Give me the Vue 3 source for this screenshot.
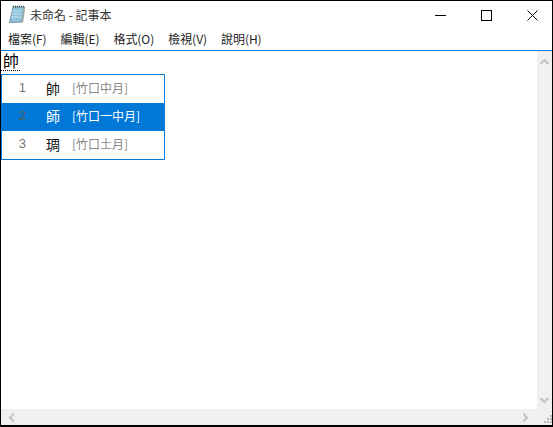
<script setup>
const menus = ['檔案(F)', '編輯(E)', '格式(O)', '檢視(V)', '說明(H)']
const candidates = [
  { n: 1, ch: '帥', code: '[竹口中月]', active: false },
  { n: 2, ch: '師', code: '[竹口一中月]', active: true },
  { n: 3, ch: '琱', code: '[竹口土月]', active: false }
]
</script>

<template>
  <div class="window">
    <header class="titlebar">
      <div class="title">
        <svg class="app-icon" width="18" height="20" viewBox="0 0 18 20">
          <path d="M5 2 L16.5 2 L14 17 L1.5 17.5 Z" fill="#8ec3da" stroke="#6f97a8" stroke-width="1" />
          <path d="M4 6 L14 6 M3.6 9 L13.6 9 M3.2 12 L13 12" stroke="#c6e2ee" stroke-width="1" />
          <path d="M5 1.5 L16 1.5" stroke="#444" stroke-width="1.6" stroke-dasharray="1 1" />
          <path d="M16.5 3 L14.5 17.5" stroke="#a8a8a0" stroke-width="1.2" fill="none" />
        </svg>
        <span>未命名 - 記事本</span>
      </div>
      <div class="controls">
        <div class="ctl">
          <svg width="11" height="11" viewBox="0 0 11 11"><path d="M0 5.5H11" stroke="#000" stroke-width="1" /></svg>
        </div>
        <div class="ctl">
          <svg width="11" height="11" viewBox="0 0 11 11"><rect x="0.5" y="0.5" width="10" height="10" fill="none" stroke="#000" stroke-width="1" /></svg>
        </div>
        <div class="ctl">
          <svg width="11" height="11" viewBox="0 0 11 11"><path d="M0.5 0.5L10.5 10.5M10.5 0.5L0.5 10.5" stroke="#000" stroke-width="1" /></svg>
        </div>
      </div>
    </header>

    <nav class="menubar">
      <span v-for="m in menus" :key="m" class="menu">{{ m }}</span>
    </nav>

    <main class="body">
      <div class="editor">
        <div class="composition">帥</div>
        <ul class="ime">
          <li v-for="c in candidates" :key="c.n" class="cand" :class="{ active: c.active }">
            <span class="num">{{ c.n }}</span>
            <span class="ch">{{ c.ch }}</span>
            <span class="code">{{ c.code }}</span>
          </li>
        </ul>
      </div>
      <div class="vscroll">
        <svg width="9" height="6" viewBox="0 0 9 6"><path d="M0 5L4.5 0.5L9 5V6H7L4.5 3.5L2 6H0Z" fill="#c4c4c4" /></svg>
        <svg width="9" height="6" viewBox="0 0 9 6"><path d="M0 1L4.5 5.5L9 1V0H7L4.5 2.5L2 0H0Z" fill="#c4c4c4" /></svg>
      </div>
    </main>

    <footer class="hscroll-row">
      <div class="hscroll">
        <svg width="6" height="9" viewBox="0 0 6 9"><path d="M5 0L0.5 4.5L5 9H6V7L3.5 4.5L6 2V0Z" fill="#c4c4c4" /></svg>
        <svg width="6" height="9" viewBox="0 0 6 9"><path d="M1 0L5.5 4.5L1 9H0V7L2.5 4.5L0 2V0Z" fill="#c4c4c4" /></svg>
      </div>
      <div class="grip">
        <svg width="9" height="9" viewBox="0 0 9 9">
          <path d="M7 0h2v2H7zM4 3h2v2H4zM7 3h2v2H7zM1 6h2v2H1zM4 6h2v2H4zM7 6h2v2H7z" fill="#b8b8b8" />
        </svg>
      </div>
    </footer>
  </div>
</template>

<style>
html, body { margin: 0; padding: 0; background: #fff; }
</style>

<style scoped>
.window {
  box-sizing: border-box;
  width: 553px;
  height: 427px;
  border: 1px solid #000;
  border-bottom-width: 2px;
  display: flex;
  flex-direction: column;
  background: #fff;
  font-family: "Noto Sans CJK TC", "Liberation Sans", sans-serif;
  color: #000;
  overflow: hidden;
}
.titlebar {
  height: 29px;
  display: flex;
  justify-content: space-between;
  align-items: center;
  flex: none;
}
.title {
  display: flex;
  align-items: center;
  gap: 4px;
  padding-left: 7px;
  font-size: 12px;
  line-height: 16px;
  color: #333;
  padding-bottom: 1px;
}
.controls { display: flex; margin-right: -3px; }
.ctl {
  width: 46px;
  height: 29px;
  display: flex;
  align-items: center;
  justify-content: center;
}
.menubar {
  height: 20px;
  flex: none;
  display: flex;
  align-items: flex-start;
  border-bottom: 1px solid #0078d7;
  font-size: 12px;
  line-height: 18px;
}
.menu { padding: 0 7px 0 7px; color: #222; letter-spacing: -0.05px; }
.body {
  flex: 1;
  min-height: 0;
  display: flex;
}
.editor {
  flex: 1;
  min-width: 0;
  position: relative;
}
.composition {
  width: 19px;
  height: 20px;
  padding-left: 2px;
  font-size: 16px;
  line-height: 19px;
  box-sizing: border-box;
  border-bottom: 1px dotted #000;
  color: #000;
}
.ime {
  list-style: none;
  margin: 0;
  padding: 0;
  position: absolute;
  left: 0;
  top: 23px;
  width: 164px;
  box-sizing: border-box;
  border: 1px solid #0078d7;
  background: #fff;
}
.cand {
  height: 28px;
  display: flex;
  align-items: center;
  font-size: 12px;
  line-height: 16px;
  color: #888;
  padding-bottom: 2px;
  box-sizing: border-box;
}
.cand.active { background: #0078d7; color: #fff; }
.num {
  width: 44px;
  padding-right: 20px;
  box-sizing: border-box;
  text-align: right;
  color: #777;
  font-size: 13px;
  font-family: "Liberation Sans", sans-serif;
}
.cand.active .num { color: #555; }
.ch {
  width: 26px;
  font-size: 14px;
  color: #111;
}
.cand.active .ch { color: #fff; }
.vscroll {
  width: 15px;
  flex: none;
  background: #f0f0f0;
  display: flex;
  flex-direction: column;
  justify-content: space-between;
  align-items: center;
  padding: 7px 0 5px;
  box-sizing: border-box;
}
.hscroll-row {
  height: 16px;
  flex: none;
  display: flex;
}
.hscroll {
  flex: 1;
  background: #f0f0f0;
  display: flex;
  justify-content: space-between;
  align-items: center;
  padding: 0 8px 0 7px;
}
.grip {
  width: 15px;
  flex: none;
  background: #f0f0f0;
  display: flex;
  align-items: flex-end;
  justify-content: flex-end;
  padding: 0 0 1px 0;
  box-sizing: border-box;
}
</style>
